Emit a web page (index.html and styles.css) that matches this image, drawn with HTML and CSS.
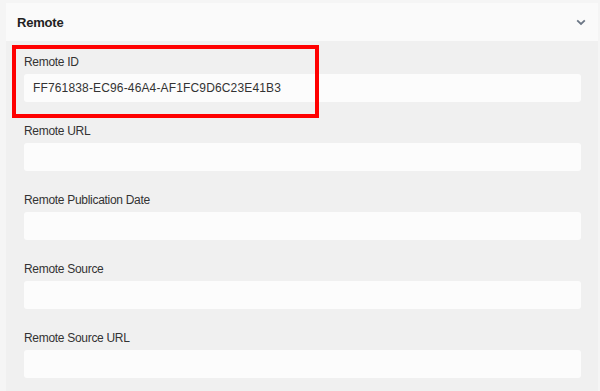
FILE: index.html
```html
<!DOCTYPE html>
<html>
<head>
<meta charset="utf-8">
<link rel="stylesheet" href="styles.css">
</head>
<body>
<div class="panel">
  <div class="panel-header">
    <span class="panel-title">Remote</span>
    <svg class="chevron" width="10" height="7" viewBox="0 0 10 7"><path d="M1.2 1.4 L5 5 L8.8 1.4" fill="none" stroke="#6b7685" stroke-width="1.8"/></svg>
  </div>
  <div class="panel-body">
    <div class="field highlighted">
      <label class="field-label">Remote ID</label>
      <div class="field-input">FF761838-EC96-46A4-AF1FC9D6C23E41B3</div>
      <div class="annotation"></div>
    </div>
    <div class="field">
      <label class="field-label">Remote URL</label>
      <div class="field-input"></div>
    </div>
    <div class="field">
      <label class="field-label">Remote Publication Date</label>
      <div class="field-input"></div>
    </div>
    <div class="field">
      <label class="field-label">Remote Source</label>
      <div class="field-input"></div>
    </div>
    <div class="field">
      <label class="field-label">Remote Source URL</label>
      <div class="field-input"></div>
    </div>
  </div>
</div>
</body>
</html>
```
FILE: styles.css
```css
html, body {
  margin: 0;
  padding: 0;
  background: #f5f5f5;
  font-family: "Liberation Sans", Arial, sans-serif;
  overflow: hidden;
}
.panel {
  margin: 3px 2px 0 6px;
}
.panel-header {
  height: 38px;
  background: #fafafa;
  display: flex;
  align-items: center;
  justify-content: space-between;
  padding: 0 11px;
}
.panel-title {
  font-size: 13px;
  font-weight: bold;
  color: #222;
  letter-spacing: -0.2px;
}
.chevron {
  display: block;
  margin-right: 1px;
}
.panel-body {
  background: #f0f0f0;
  padding: 14px 17px 0 18px;
  height: 360px;
}
.field {
  position: relative;
  display: flex;
  flex-direction: column;
  gap: 5px;
  margin-bottom: 22px;
}
.field-label {
  font-size: 12px;
  line-height: 14px;
  color: #333;
  letter-spacing: -0.3px;
}
.field-input {
  height: 28px;
  background: #fcfcfc;
  border-radius: 3px;
  font-size: 12px;
  line-height: 28px;
  color: #333;
  padding-left: 9px;
  letter-spacing: 0.15px;
}
.annotation {
  position: absolute;
  left: -12px;
  top: -10px;
  width: 299px;
  height: 65px;
  border: 4px solid #ff0000;
  pointer-events: none;
}
```
